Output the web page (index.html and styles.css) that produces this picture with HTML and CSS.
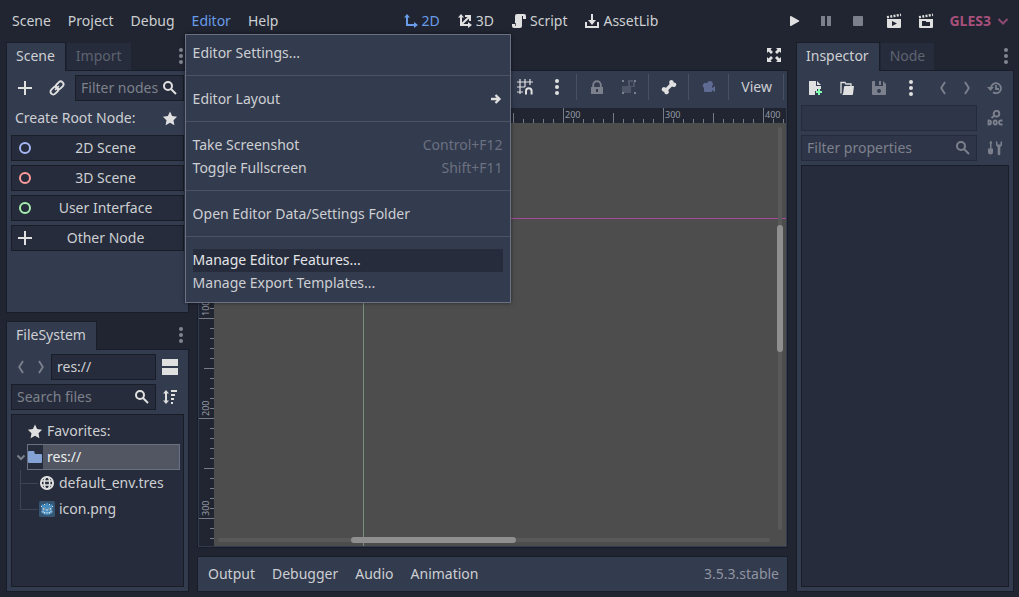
FILE: index.html
```html
<!DOCTYPE html>
<html lang="en">
<head>
<meta charset="utf-8">
<title>Godot Engine</title>
<link rel="stylesheet" href="styles.css">
</head>
<body>
<svg class="sprite" aria-hidden="true">
  <symbol id="i-2d" viewBox="0 0 16 16"><path d="M4 1 1 4.500h2V13h8v2l4-3-4-3v2H5V4.500h2z"/></symbol>
  <symbol id="i-3d" viewBox="0 0 16 16"><path d="M4 1 1 4.500h2V13h8v2l4-3-4-3v2H6.400L12 5.400V8h2V2H8v2h2.600L5 9.600V4.500h2z"/></symbol>
  <symbol id="i-script" viewBox="0 0 16 16"><path d="M6 1a2 2 0 0 0-2 2v8H1v2a2 2 0 0 0 2 2h6a2 2 0 0 0 2-2V6h4V3a2 2 0 0 0-2-2z"/><path d="M11.500 3v3" stroke="#202531"/><path d="M4.500 10v3" stroke="#202531" stroke-width=".7"/></symbol>
  <symbol id="i-asset" viewBox="0 0 16 16"><path d="M7 1v6H4l4 5 4-5H9V1zM1 9v6h14V9h-2v4H3V9z"/></symbol>
  <symbol id="i-play" viewBox="0 0 16 16"><path d="M4 3.500v9c0 .5.500.700 1 .5l8-4.500c.4-.3.400-.7 0-1L5 3c-.5-.2-1 0-1 .5z"/></symbol>
  <symbol id="i-pause" viewBox="0 0 16 16"><path d="M3 3h4v10H3zM9 3h4v10H9z"/></symbol>
  <symbol id="i-stop" viewBox="0 0 16 16"><rect x="3" y="3" width="10" height="10" rx="1"/></symbol>
  <symbol id="i-playscene" viewBox="0 0 16 16"><path d="M1 6h14v8a1 1 0 0 1-1 1H2a1 1 0 0 1-1-1zm5 2v5l5-2.500z" fill-rule="evenodd"/><path d="m1 4.200 14-2.400" fill="none" stroke="currentColor" stroke-width="2.400" stroke-dasharray="2 1.300"/></symbol>
  <symbol id="i-playcustom" viewBox="0 0 16 16"><path d="M1 6h14v8a1 1 0 0 1-1 1H2a1 1 0 0 1-1-1zm3 2v5h8V9H8V8z" fill-rule="evenodd"/><path d="m1 4.200 14-2.400" fill="none" stroke="currentColor" stroke-width="2.400" stroke-dasharray="2 1.300"/></symbol>
  <symbol id="i-chevdown" viewBox="0 0 16 16"><path d="m3.500 6 4.500 4.500L12.500 6" fill="none" stroke="currentColor" stroke-width="2"/></symbol>
  <symbol id="i-fold" viewBox="0 0 12 12"><path d="m2.500 4.500 3.500 3.500 3.500-3.500" fill="none" stroke="currentColor" stroke-width="2"/></symbol>
  <symbol id="i-add" viewBox="0 0 16 16"><path d="M7 1v6H1v2h6v6h2V9h6V7H9V1z"/></symbol>
  <symbol id="i-link" viewBox="0 0 16 16"><g fill="none" stroke="currentColor" stroke-width="1.900" transform="rotate(-45 8 8)"><rect x="0" y="5.200" width="8.600" height="5.600" rx="2.800"/><rect x="7.400" y="5.200" width="8.600" height="5.600" rx="2.800"/></g><path d="m6 10 4-4" stroke="currentColor" stroke-width="1.500"/></symbol>
  <symbol id="i-search" viewBox="0 0 16 16"><g fill="none" stroke="currentColor" stroke-width="2"><circle cx="6" cy="6" r="4"/><path d="m9 9 5 5"/></g></symbol>
  <symbol id="i-star" viewBox="0 0 16 16"><path d="M8 1.500 10.100 6l5 .7-3.600 3.500.9 5L8 12.800l-4.400 2.400.9-5L.900 6.700l5-.7z"/></symbol>
  <symbol id="i-node" viewBox="0 0 16 16"><circle cx="8" cy="8" r="5" fill="none" stroke="currentColor" stroke-width="2"/></symbol>
  <symbol id="i-dots" viewBox="0 0 16 16"><circle cx="8" cy="2" r="2"/><circle cx="8" cy="8" r="2"/><circle cx="8" cy="14" r="2"/></symbol>
  <symbol id="i-back" viewBox="0 0 16 16"><path d="M10 2 6.200 8l3.800 6" fill="none" stroke="currentColor" stroke-width="1.900"/></symbol>
  <symbol id="i-fwd" viewBox="0 0 16 16"><path d="m6 2 3.800 6L6 14" fill="none" stroke="currentColor" stroke-width="1.900"/></symbol>
  <symbol id="i-split" viewBox="0 0 16 16"><path d="M0 0h16v7H0zM0 9h16v7H0z"/></symbol>
  <symbol id="i-sort" viewBox="0 0 16 16"><path d="M4 1 1 4.500h2v7H1L4 15l3-3.500H5v-7h2zM9 1h6v2H9zM9 5h4v2H9zM9 9h3v2H9zM9 13h2v2H9z"/></symbol>
  <symbol id="i-folder" viewBox="0 0 15 16"><path d="M0 3a1 1 0 0 1 1-1h4.500a1 1 0 0 1 1 1v1a1 1 0 0 0 1 1H13a1 1 0 0 1 1 1v7a1 1 0 0 1-1 1H1a1 1 0 0 1-1-1z"/></symbol>
  <symbol id="i-globe" viewBox="0 0 16 16"><g fill="none" stroke="currentColor"><circle cx="8" cy="8" r="6.100" stroke-width="1.900"/><ellipse cx="8" cy="8" rx="2.700" ry="6" stroke-width="1.600"/><path d="M2 6h12M2 10h12" stroke-width="1.500"/></g></symbol>
  <symbol id="i-godot" viewBox="0 0 16 16"><rect width="16" height="16" rx="1.500" fill="#355570"/><path d="M2 4.500 3.500 3 5 4l1.500-.5L7 2h2l.5 1.500L11 4l1.500-1L14 4.500 13.300 6v6Q11 14 8 14t-5.300-2V6z" fill="#478cbf"/><g fill="#d8e4ee"><circle cx="5" cy="8" r="1.300"/><circle cx="11" cy="8" r="1.300"/><path d="M7.500 8h1v2h-1zM2.500 10.500H5v.7H2.500zM11 10.500h2.500v.7H11zM5 11h1v1.500H5zM10 11h1v1.500h-1zM6.500 11.500h3v.7h-3zM5 3h1v1H5zM10 3h1v1h-1zM2 5h1v1H2zM13 5h1v1h-1z"/></g><g fill="#414042"><circle cx="5.200" cy="8" r=".7"/><circle cx="10.800" cy="8" r=".7"/></g></symbol>
  <symbol id="i-grid" viewBox="0 0 16 16"><path d="M3 0v15M8 0v8M13 0v6M0 3h16M0 8h8M0 13h6" fill="none" stroke="currentColor" stroke-width="1.200"/><path d="M9 15.500v-3.500a2.800 2.800 0 0 1 5.600 0v3.500" fill="none" stroke="currentColor" stroke-width="2"/></symbol>
  <symbol id="i-lock" viewBox="0 0 16 16"><path d="M4.200 8V6a3.800 3.800 0 0 1 7.600 0v2" fill="none" stroke="currentColor" stroke-width="1.900"/><path d="M2 8h12v7H2zm5 2v3h2v-3z" fill-rule="evenodd"/></symbol>
  <symbol id="i-group" viewBox="0 0 16 16"><path d="M1 1h2v2H1zM13 1h2v2h-2zM1 13h2v2H1zM13 13h2v2h-2z"/><path d="M7 1h5v2h2v5h-4v6H1V7h6zM9 3v4h3V3z" fill-rule="evenodd" opacity=".4"/></symbol>
  <symbol id="i-bone" viewBox="0 0 16 16"><path d="M10.500 1a2.300 2.300 0 0 0-2.200 3.100L8.600 5 5 8.700l-.9-.3a2.300 2.300 0 1 0-.8 4.300 2.300 2.300 0 1 0 4.300-.8L7.300 11 11 7.400l.9.300a2.300 2.300 0 1 0 .8-4.300A2.300 2.300 0 0 0 10.500 1z"/></symbol>
  <symbol id="i-camera" viewBox="0 0 16 16"><path d="M9 2a3 3 0 0 0-2.900 2.300A2.600 2.600 0 1 0 3 8.700V12a1 1 0 0 0 1 1h6a1 1 0 0 0 1-1v-1l3 2V7l-3 2V7.200A3 3 0 0 0 9 2z"/></symbol>
  <symbol id="i-expand" viewBox="0 0 16 16"><path d="M1 1h5L4.500 2.500l2.500 2.500L5 7 2.500 4.500 1 6zM15 1v5l-1.500-1.500L11 7 9 5l2.500-2.500L10 1zM1 15v-5l1.500 1.500L5 9l2 2-2.500 2.500L6 15zM15 15h-5l1.500-1.500L9 11l2-2 2.500 2.500L15 10z"/></symbol>
  <symbol id="i-new" viewBox="0 0 16 16"><path d="M2 1v14h6v-4h2V9h4V6H9V1zM10 1v4h4z"/><path d="M11 9h2v2h2v2h-2v2h-2v-2H9v-2h2z" fill="#84ffb1"/></symbol>
  <symbol id="i-open" viewBox="0 0 16 16"><path d="M2 13.500V2.500h4l1 1.500h5v2.500" fill="none" stroke="currentColor" stroke-width="1.300"/><path d="M6 6h9l-1 8a1 1 0 0 1-1 1H2c1.500 0 2-.5 2.200-2L5 7c.1-.6.400-1 1-1z"/></symbol>
  <symbol id="i-save" viewBox="0 0 16 16"><path d="M2 1a1 1 0 0 0-1 1v12a1 1 0 0 0 1 1h12a1 1 0 0 0 1-1V4l-3-3v5H4V1zm6 8a2 2 0 1 1 0 4 2 2 0 0 1 0-4z" fill-rule="evenodd"/><path d="M8 1h2v4H8z"/></symbol>
  <symbol id="i-history" viewBox="0 0 16 16"><path d="M4 8a5 5 0 1 1 2 4.200M9 5v4h3" fill="none" stroke="currentColor" stroke-width="1.800"/><path d="M0 7h7l-3.500 4z"/></symbol>
  <symbol id="i-doc" viewBox="0 0 16 16"><g fill="none" stroke="currentColor" stroke-width="1.900"><circle cx="9.500" cy="3.700" r="2.800"/><path d="M7.300 5.700 4.500 8"/></g><path d="M1.500 9.800v5.400M1 10.500h1q2 0 2 2t-2 2H1M9.800 12.500q0 2-1.600 2t-1.600-2 1.600-2 1.600 2zM15.500 10.500H14q-2 0-2 2t2 2h1.500" fill="none" stroke="currentColor" stroke-width="1.800"/></symbol>
  <symbol id="i-tools" viewBox="0 0 16 16"><path d="M3.500 1h1l.5 2-.5 1v4.500H6v4a2.500 2 0 0 1-5 0v-4h2V4L2.500 3zM9 1v3.500A3 3 0 0 0 10.700 7v7a1.300 1.300 0 0 0 2.600 0V7A3 3 0 0 0 15 4.500V1l-1.500 1v2.500h-3V2z"/></symbol>
  <symbol id="i-arrow" viewBox="0 0 16 16"><path d="M4 8h8M8.500 4l4 4-4 4" fill="none" stroke="currentColor" stroke-width="2.300"/></symbol>
</svg>

<header class="topbar">
  <nav class="menus">
    <button class="menu-btn">Scene</button>
    <button class="menu-btn">Project</button>
    <button class="menu-btn">Debug</button>
    <div class="menu-holder">
      <button class="menu-btn active" aria-expanded="true">Editor</button>
      <div class="popup" role="menu">
        <button class="popup-item" role="menuitem">Editor Settings...</button>
        <hr class="popup-sep">
        <button class="popup-item" role="menuitem">Editor Layout<svg class="icon"><use href="#i-arrow"/></svg></button>
        <hr class="popup-sep">
        <button class="popup-item" role="menuitem">Take Screenshot<kbd>Control+F12</kbd></button>
        <button class="popup-item" role="menuitem">Toggle Fullscreen<kbd>Shift+F11</kbd></button>
        <hr class="popup-sep">
        <button class="popup-item" role="menuitem">Open Editor Data/Settings Folder</button>
        <hr class="popup-sep">
        <button class="popup-item hover" role="menuitem">Manage Editor Features...</button>
        <button class="popup-item" role="menuitem">Manage Export Templates...</button>
      </div>
    </div>
    <button class="menu-btn">Help</button>
  </nav>
  <nav class="modes">
    <button class="mode active"><svg class="icon"><use href="#i-2d"/></svg>2D</button>
    <button class="mode"><svg class="icon"><use href="#i-3d"/></svg>3D</button>
    <button class="mode"><svg class="icon"><use href="#i-script"/></svg>Script</button>
    <button class="mode"><svg class="icon"><use href="#i-asset"/></svg>AssetLib</button>
  </nav>
  <div class="run">
    <div class="run-group">
      <button class="tool" aria-label="Play"><svg class="icon"><use href="#i-play"/></svg></button>
      <button class="tool dim" aria-label="Pause"><svg class="icon"><use href="#i-pause"/></svg></button>
      <button class="tool dim" aria-label="Stop"><svg class="icon"><use href="#i-stop"/></svg></button>
    </div>
    <div class="run-group">
      <button class="tool" aria-label="Play scene"><svg class="icon"><use href="#i-playscene"/></svg></button>
      <button class="tool" aria-label="Play custom scene"><svg class="icon"><use href="#i-playcustom"/></svg></button>
      <button class="driver">GLES3<svg class="icon"><use href="#i-chevdown"/></svg></button>
    </div>
  </div>
</header>

<main class="workspace">
  <div class="left">
    <section class="dock scene-dock">
      <div class="tabs">
        <button class="tab selected">Scene</button>
        <button class="tab">Import</button>
        <button class="more" aria-label="Dock options"><svg class="icon"><use href="#i-dots"/></svg></button>
      </div>
      <div class="panel">
        <div class="row">
          <button class="tool" aria-label="Add node"><svg class="icon"><use href="#i-add"/></svg></button>
          <button class="tool" aria-label="Instance scene"><svg class="icon"><use href="#i-link"/></svg></button>
          <label class="field"><input type="text" placeholder="Filter nodes" aria-label="Filter nodes"><svg class="icon"><use href="#i-search"/></svg></label>
        </div>
        <div class="row tight">
          <span class="caption">Create Root Node:</span>
          <button class="tool" aria-label="Favorites"><svg class="icon"><use href="#i-star"/></svg></button>
        </div>
        <button class="create"><svg class="icon c-2d"><use href="#i-node"/></svg><span>2D Scene</span></button>
        <button class="create"><svg class="icon c-3d"><use href="#i-node"/></svg><span>3D Scene</span></button>
        <button class="create"><svg class="icon c-ui"><use href="#i-node"/></svg><span>User Interface</span></button>
        <button class="create"><svg class="icon"><use href="#i-add"/></svg><span>Other Node</span></button>
      </div>
    </section>
    <section class="dock files-dock">
      <div class="tabs">
        <button class="tab selected">FileSystem</button>
        <button class="more" aria-label="Dock options"><svg class="icon"><use href="#i-dots"/></svg></button>
      </div>
      <div class="panel">
        <div class="row tight">
          <button class="nav" aria-label="Previous folder"><svg class="icon"><use href="#i-back"/></svg></button>
          <button class="nav" aria-label="Next folder"><svg class="icon"><use href="#i-fwd"/></svg></button>
          <label class="field"><input type="text" value="res://" aria-label="Path"></label>
          <button class="tool" aria-label="Toggle split mode"><svg class="icon"><use href="#i-split"/></svg></button>
        </div>
        <div class="row tight">
          <label class="field"><input type="text" placeholder="Search files" aria-label="Search files"><svg class="icon"><use href="#i-search"/></svg></label>
          <button class="tool" aria-label="Sort files"><svg class="icon"><use href="#i-sort"/></svg></button>
        </div>
        <ul class="tree">
          <li class="node"><svg class="icon"><use href="#i-star"/></svg>Favorites:</li>
          <li class="branch">
            <div class="node root"><svg class="icon fold"><use href="#i-fold"/></svg><span class="chosen"><span class="folder"><svg class="icon"><use href="#i-folder"/></svg></span>res://</span></div>
            <ul class="leaves">
              <li class="leaf"><svg class="icon"><use href="#i-globe"/></svg>default_env.tres</li>
              <li class="leaf"><svg class="icon"><use href="#i-godot"/></svg>icon.png</li>
            </ul>
          </li>
        </ul>
      </div>
    </section>
  </div>

  <div class="center">
    <div class="tabs"><button class="tool end" aria-label="Distraction free mode"><svg class="icon"><use href="#i-expand"/></svg></button></div>
    <section class="editor">
      <div class="toolbar">
        <button class="tool" aria-label="Grid snap"><svg class="icon"><use href="#i-grid"/></svg></button>
        <button class="tool" aria-label="Snap options"><svg class="icon"><use href="#i-dots"/></svg></button>
        <span class="sep"></span>
        <button class="tool dim" aria-label="Lock"><svg class="icon"><use href="#i-lock"/></svg></button>
        <button class="tool dim" aria-label="Group"><svg class="icon"><use href="#i-group"/></svg></button>
        <span class="sep"></span>
        <button class="tool" aria-label="Skeleton options"><svg class="icon"><use href="#i-bone"/></svg></button>
        <span class="sep"></span>
        <button class="tool cam" aria-label="Override camera"><svg class="icon"><use href="#i-camera"/></svg></button>
        <span class="sep"></span>
        <button class="menu-btn">View</button>
        <span class="sep"></span>
      </div>
      <div class="stage">
        <div class="corner"></div>
        <div class="ruler-x"><span class="mark m0">0</span><span class="mark m100">100</span><span class="mark m200">200</span><span class="mark m300">300</span><span class="mark m400">400</span></div>
        <div class="ruler-y"><span class="mark m0">0</span><span class="mark m100">100</span><span class="mark m200">200</span><span class="mark m300">300</span></div>
        <div class="canvas">
          <div class="axis-x"></div><div class="axis-y"></div>
          <div class="track-x"></div><div class="grab-x"></div>
          <div class="track-y"></div><div class="grab-y"></div>
        </div>
      </div>
    </section>
    <footer class="bottom">
      <button>Output</button><button>Debugger</button><button>Audio</button><button>Animation</button>
      <span class="version">3.5.3.stable</span>
    </footer>
  </div>

  <section class="dock right">
    <div class="tabs">
      <button class="tab selected">Inspector</button>
      <button class="tab">Node</button>
      <button class="more" aria-label="Dock options"><svg class="icon"><use href="#i-dots"/></svg></button>
    </div>
    <div class="panel">
      <div class="row">
        <button class="tool" aria-label="New resource"><svg class="icon"><use href="#i-new"/></svg></button>
        <button class="tool" aria-label="Load resource"><svg class="icon"><use href="#i-open"/></svg></button>
        <button class="tool dim" aria-label="Save resource"><svg class="icon"><use href="#i-save"/></svg></button>
        <button class="tool" aria-label="Resource options"><svg class="icon"><use href="#i-dots"/></svg></button>
        <button class="nav end" aria-label="Previous object"><svg class="icon"><use href="#i-back"/></svg></button>
        <button class="nav" aria-label="Next object"><svg class="icon"><use href="#i-fwd"/></svg></button>
        <button class="tool dim" aria-label="History"><svg class="icon"><use href="#i-history"/></svg></button>
      </div>
      <div class="row">
        <button class="field off" aria-label="Edited object"></button>
        <button class="tool dim" aria-label="Open documentation"><svg class="icon"><use href="#i-doc"/></svg></button>
      </div>
      <div class="row">
        <label class="field off"><input type="text" placeholder="Filter properties" aria-label="Filter properties"><svg class="icon"><use href="#i-search"/></svg></label>
        <button class="tool dim" aria-label="Object properties"><svg class="icon"><use href="#i-tools"/></svg></button>
      </div>
      <div class="properties"></div>
    </div>
  </section>
</main>
</body>
</html>
```
FILE: styles.css
```css
:root {
  --page: #202531;
  --base: #333b4f;
  --dark: #262c3b;
  --edge: #191d27;
  --text: #cdcfd2;
  --icon: #e0e0e0;
  --muted: #7b808c;
  --accent: #699ce8;
}
* { box-sizing: border-box; }
body {
  margin: 0;
  height: 100vh;
  display: flex;
  flex-direction: column;
  background: var(--page);
  color: var(--text);
  font: 14px/20px "Noto Sans", "Open Sans", sans-serif;
  overflow: hidden;
}
button, input {
  font: inherit;
  color: inherit;
  background: none;
  border: 0;
  padding: 0;
  margin: 0;
  border-radius: 0;
  outline: 0;
}
button { white-space: nowrap; }
ul { list-style: none; margin: 0; padding: 0; }
.sprite { position: absolute; width: 0; height: 0; }
.icon { width: 16px; height: 16px; flex: none; display: block; color: var(--icon); fill: currentColor; }
.end { margin-left: auto; }

/* Top bar */
.topbar {
  display: flex;
  justify-content: space-between;
  padding: 8px 8px 8px 6px;
}
.menus { display: flex; gap: 5px; }
.modes { display: flex; gap: 5px; margin-right: 4px; }
.run { display: flex; gap: 8px; }
.run-group { display: flex; gap: 4px; }
.menu-btn { height: 26px; padding: 0 6px; }
.active, .active .icon { color: var(--accent); }
.menu-holder { position: relative; }
.mode { display: flex; align-items: center; gap: 3px; height: 26px; padding: 0 6px; }
.tool { display: flex; align-items: center; justify-content: center; width: 28px; height: 26px; flex: none; }
.dim .icon { color: var(--muted); }
.driver {
  display: flex;
  align-items: center;
  gap: 4px;
  padding-left: 5px;
  height: 26px;
  color: #a8507c;
  font-weight: 700;
}
.driver .icon { color: #8e4a72; }

/* Popup menu */
.popup {
  position: absolute;
  z-index: 5;
  top: 100%;
  left: -1px;
  width: 326px;
  padding: 7px 0;
  background: var(--base);
  border: 1px solid #6b7182;
  box-shadow: 0 0 4px rgba(0, 0, 0, .5);
}
.popup-item {
  display: flex;
  align-items: center;
  justify-content: space-between;
  width: calc(100% - 14px);
  height: 23px;
  margin: 0 7px;
  padding-bottom: 2px;
}
.popup-item.hover { background: var(--dark); color: #e2e4e8; }
.popup-item kbd { font: inherit; color: #6b7180; }
.popup-sep { height: 1px; margin: 10px 0 12px; border: 0; background: #4c5266; }

/* Docks */
.workspace {
  flex: 1;
  min-height: 0;
  display: grid;
  grid-template-columns: 183px minmax(0, 1fr) 218px;
  gap: 8px;
  padding: 0 5px 5px 6px;
}
.left { display: flex; flex-direction: column; gap: 8px; min-height: 0; }
.dock { display: flex; flex-direction: column; min-height: 0; }
.scene-dock, .files-dock { flex: 1; }
.tabs { display: flex; height: 28px; flex: none; }
.tab {
  height: 28px;
  padding: 0 9px 2px;
  border: 1px solid transparent;
  border-bottom: 0;
  background: var(--dark) padding-box;
  color: #5e6371;
}
.tab.selected {
  position: relative;
  height: 29px;
  padding: 0 10px 3px 9px;
  background: var(--base);
  border-color: var(--edge);
  color: var(--text);
}
.more { display: flex; align-items: center; justify-content: center; width: 16px; margin-left: auto; }
.more .icon { color: #81858f; }
.panel {
  flex: 1;
  min-height: 0;
  display: flex;
  flex-direction: column;
  gap: 4px;
  padding: 4px;
  background: var(--base);
  border: 1px solid var(--edge);
}
.row { display: flex; align-items: center; gap: 4px; height: 26px; flex: none; }
.row.tight { gap: 0; }
.caption { flex: 1; padding-left: 4px; white-space: nowrap; }
.field {
  flex: 1;
  min-width: 0;
  height: 26px;
  display: flex;
  align-items: center;
  padding: 0 5px;
  background: var(--dark);
  border: 1px solid var(--edge);
}
.field input { flex: 1; min-width: 0; width: 0; height: 20px; }
.field input::placeholder { color: #7d818c; opacity: 1; }
.field.off { background: #2f3548; border-color: #252b3a; }
.field.off .icon { color: var(--muted); }
.nav { display: flex; justify-content: center; width: 20px; }
.nav .icon { color: var(--muted); }
.create {
  display: grid;
  grid-template-columns: 16px 1fr;
  align-items: center;
  height: 26px;
  padding: 0 5px;
  flex: none;
  background: var(--dark);
  border: 1px solid var(--edge);
}
.c-2d { color: #a5b7f3; }
.c-3d { color: #fc9c9c; }
.c-ui { color: #a5efac; }

/* File tree */
.tree {
  flex: 1;
  min-height: 0;
  padding: 3px;
  background: var(--dark);
  border: 1px solid var(--edge);
}
.node { display: flex; align-items: center; gap: 4px; height: 26px; padding-left: 12px; }
.node.root { gap: 0; padding-left: 0; }
.fold { width: 12px; color: var(--muted); }
.chosen {
  flex: 1;
  display: flex;
  align-items: center;
  gap: 4px;
  height: 26px;
  background: #525662;
  border: 1px solid #6b7080;
  color: #eceef0;
}
.folder { display: flex; align-items: center; height: 24px; background: var(--dark); }
.folder .icon { width: 15px; color: #84a2d4; }
.leaves { margin-left: 5px; }
.leaf {
  display: flex;
  align-items: center;
  gap: 4px;
  height: 26px;
  background: linear-gradient(#3f4453, #3f4453) 0 13px / 18px 1px no-repeat, linear-gradient(#3f4453, #3f4453) 0 0 / 1px 100% no-repeat;
  padding-left: 19px;
}
.leaf:last-child { background-size: 18px 1px, 1px 13px; }

/* Center */
.center { display: flex; flex-direction: column; min-height: 0; }
.editor {
  flex: 1;
  min-height: 0;
  display: flex;
  flex-direction: column;
  background: var(--base);
  border: 1px solid var(--edge);
}
.toolbar {
  display: flex;
  justify-content: flex-end;
  gap: 4px;
  padding: 3px 1px 8px;
}
.sep { width: 4px; height: 26px; background: linear-gradient(#4a5063, #4a5063) 1px 0 / 1px 100% no-repeat; }
.cam .icon { color: #5f6b93; }
.stage {
  flex: 1;
  min-height: 0;
  display: grid;
  grid-template: 15px minmax(0, 1fr) / 15px minmax(0, 1fr);
  margin: 0 1px 1px;
}
.corner { background: var(--page); }
.ruler-x, .ruler-y {
  position: relative;
  overflow: hidden;
  background-color: var(--page);
  background-repeat: no-repeat;
  font-size: 9px;
  line-height: 12px;
  color: #989ba4;
}
/* Ticks every 10, 50 and 100 units; --o is the origin's offset */
.ruler-x {
  --o: 149px;
  background-image:
    repeating-linear-gradient(90deg, #777b86 0 1px, transparent 1px 10px),
    repeating-linear-gradient(90deg, #777b86 0 1px, transparent 1px 50px),
    repeating-linear-gradient(90deg, #777b86 0 1px, transparent 1px 100px);
  background-size: 3000px 4px, 3000px 10px, 3000px 15px;
  background-position: -51px 100%;
}
.ruler-y {
  --o: 95px;
  background-image:
    repeating-linear-gradient(#777b86 0 1px, transparent 1px 10px),
    repeating-linear-gradient(#777b86 0 1px, transparent 1px 50px),
    repeating-linear-gradient(#777b86 0 1px, transparent 1px 100px);
  background-size: 4px 3000px, 10px 3000px, 15px 3000px;
  background-position: 100% -5px;
}
.mark { position: absolute; }
.m0 { --v: 0px; }
.m100 { --v: 100px; }
.m200 { --v: 200px; }
.m300 { --v: 300px; }
.m400 { --v: 400px; }
.ruler-x .mark { left: calc(var(--o) + var(--v) + 2px); top: 1px; }
.ruler-y .mark {
  left: 1px;
  top: calc(var(--o) + var(--v) - 18px);
  height: 16px;
  writing-mode: vertical-rl;
  transform: rotate(180deg);
}
.canvas { position: relative; overflow: hidden; background: #4d4d4d; }
.canvas div { position: absolute; }
.axis-x { left: 0; right: 0; top: 95px; height: 1px; background: #a5499a; }
.axis-y { top: 0; bottom: 0; left: 149px; width: 1px; background: #799078; }
.track-x, .track-y { background: #595959; border-radius: 2px; }
.track-x { left: 4px; right: 16px; bottom: 4px; height: 4px; }
.track-y { top: 4px; bottom: 16px; right: 4px; width: 4px; }
.grab-x, .grab-y { background: #8f8f8f; border-radius: 3px; }
.grab-x { left: 137px; width: 165px; bottom: 3px; height: 6px; }
.grab-y { top: 102px; height: 127px; right: 3px; width: 6px; }
.bottom {
  display: flex;
  align-items: center;
  gap: 17px;
  height: 36px;
  margin-top: 8px;
  padding: 0 8px 0 10px;
  background: var(--base);
  border: 1px solid var(--edge);
}
.version { margin-left: auto; color: #9094a0; }
.properties { flex: 1; background: var(--dark); border: 1px solid var(--edge); }
```
